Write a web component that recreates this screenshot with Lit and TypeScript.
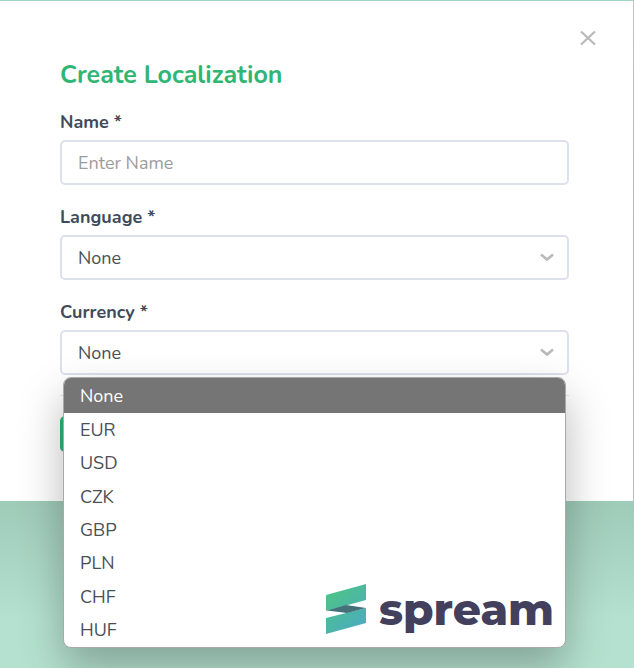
import { LitElement, html, css, svg } from "lit";
import { customElement, property } from "lit/decorators.js";

const CURRENCIES = ["None", "EUR", "USD", "CZK", "GBP", "PLN", "CHF", "HUF"];

const chevron = svg`<path d="M1 1.5 L7 6.5 L13 1.5" fill="none" stroke="currentColor" stroke-width="2.6" />`;

@customElement("spream-logo")
export class SpreamLogo extends LitElement {
  static styles = css`
    :host {
      display: flex;
      align-items: center;
      gap: 12px;
      color: #43405d;
      font: 800 44px/50px Montserrat, "DejaVu Sans", sans-serif;
    }
    .mark {
      flex: none;
      width: 42px;
      height: 52px;
    }
  `;

  render() {
    return html`
      <svg class="mark" viewBox="0 0 42 52" aria-hidden="true">
        <defs>
          <linearGradient id="fill" gradientUnits="userSpaceOnUse" x1="4" y1="8" x2="38" y2="46">
            <stop offset="0" stop-color="#4dc387" />
            <stop offset="1" stop-color="#4bacc0" />
          </linearGradient>
        </defs>
        <path d="M1 12 L41 1 V17 L1 28 Z" fill="url(#fill)" />
        <path d="M1 35 L41 25 V40 L1 51 Z" fill="url(#fill)" />
        <path d="M2 27.5 L21 22 L41 25 L22 30 Z" fill="#44707a" />
      </svg>
      <span>spream</span>
    `;
  }
}

@customElement("option-menu")
export class OptionMenu extends LitElement {
  @property({ type: Array }) options: string[] = [];
  @property() selected = "";

  static styles = css`
    :host {
      display: block;
      box-sizing: border-box;
      border: 1px solid #a9a9a9;
      border-radius: 8px;
      overflow: hidden;
      background: #fff;
      box-shadow: 0 20px 44px rgba(0, 0, 0, 0.28);
    }
    .list {
      display: grid;
      grid-template-rows: 35px;
      grid-auto-rows: 1fr;
      min-height: 269px;
      margin: 0;
      padding: 0;
      list-style: none;
    }
    .item {
      display: flex;
      align-items: center;
      padding: 0 16px;
      color: #495057;
    }
    .item.selected {
      background: #757575;
      color: #fff;
    }
    .brand {
      position: absolute;
      right: 11px;
      bottom: 12px;
    }
  `;

  render() {
    return html`
      <ul class="list" role="listbox" aria-label="Currency">
        ${this.options.map(
          (o) => html`<li
            class="item ${o === this.selected ? "selected" : ""}"
            role="option"
            aria-selected=${o === this.selected ? "true" : "false"}
          >${o}</li>`
        )}
      </ul>
      <spream-logo class="brand"></spream-logo>
    `;
  }
}

@customElement("app-root")
export class AppRoot extends LitElement {
  static styles = css`
    :host {
      display: block;
      box-sizing: border-box;
      min-height: 100vh;
      padding: 1px 1px 0 0;
      background: linear-gradient(#a3d3c2, #92c3b2 300px, #9ecab8 500px, #b5e2d0 620px);
      font: 18px/24px Nunito, "Open Sans", sans-serif;
      color: #495057;
      overflow: hidden;
    }
    .modal {
      position: relative;
      background: #fff;
      padding: 60px 64px 49px 60px;
    }
    .close {
      position: absolute;
      top: 24px;
      right: 32px;
      display: flex;
      padding: 5px;
      border: 0;
      background: none;
      color: #b9b9b9;
    }
    .title {
      margin: 0 0 21px;
      font-size: 25px;
      line-height: 28px;
      font-weight: 700;
      color: #2fb574;
    }
    .fields {
      display: grid;
      gap: 20px;
    }
    .field {
      position: relative;
      display: grid;
      gap: 6px;
    }
    .label {
      font-weight: 700;
      color: #3f4a5a;
    }
    .box {
      position: relative;
      display: grid;
    }
    .control {
      box-sizing: border-box;
      width: 100%;
      height: 45px;
      margin: 0;
      padding: 0 16px;
      border: 2px solid #dde1ee;
      border-radius: 5px;
      background: #fff;
      font: inherit;
      color: inherit;
      appearance: none;
      outline: 0;
    }
    .control::placeholder {
      color: #9c9c9c;
      opacity: 1;
    }
    .chevron {
      position: absolute;
      right: 15px;
      top: 18px;
      color: #b9b9b9;
      pointer-events: none;
    }
    .menu {
      position: absolute;
      z-index: 1;
      top: calc(100% + 2px);
      left: 3px;
      right: 3px;
    }
    .divider {
      height: 1px;
      margin: 20px 0;
      border: 0;
      background: #e6e6e6;
    }
    .submit {
      display: block;
      min-width: 100px;
      height: 36px;
      border: 0;
      border-radius: 5px;
      background: #2fb574;
    }
  `;

  private renderSelect(id: string, label: string, options: string[], menu: unknown = "") {
    return html`
      <div class="field">
        <label class="label" for=${id}>${label} *</label>
        <div class="box">
          <select class="control" id=${id}>
            ${options.map((o) => html`<option>${o}</option>`)}
          </select>
          <svg class="chevron" width="14" height="9" viewBox="0 0 14 9" aria-hidden="true">${chevron}</svg>
        </div>
        ${menu}
      </div>
    `;
  }

  render() {
    return html`
      <form class="modal">
        <button class="close" type="button" aria-label="Close">
          <svg width="16" height="16" viewBox="0 0 16 16" aria-hidden="true">
            <path d="M1 1.5 L15 14.5 M15 1.5 L1 14.5" stroke="currentColor" stroke-width="2.2" />
          </svg>
        </button>
        <h1 class="title">Create Localization</h1>
        <div class="fields">
          <div class="field">
            <label class="label" for="name">Name *</label>
            <input class="control" id="name" type="text" placeholder="Enter Name" />
          </div>
          ${this.renderSelect("language", "Language", ["None"])}
          ${this.renderSelect(
            "currency",
            "Currency",
            CURRENCIES,
            html`<option-menu class="menu" .options=${CURRENCIES} selected="None"></option-menu>`
          )}
        </div>
        <hr class="divider" />
        <button class="submit" type="submit" aria-label="Create"></button>
      </form>
    `;
  }
}
